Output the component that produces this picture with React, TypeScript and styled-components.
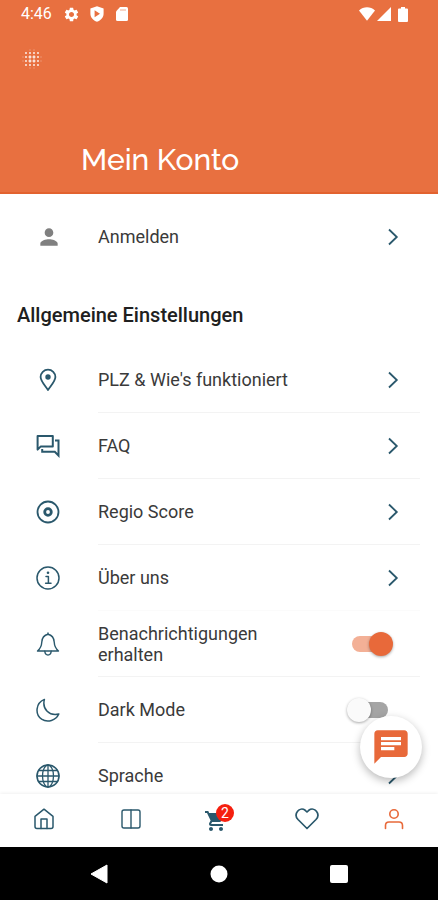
import React, { useState } from "react";
import styled, { createGlobalStyle } from "styled-components";
import {
  MdBlurOn,
  MdChat,
  MdPerson,
  MdSettings,
  MdShoppingCart,
} from "react-icons/md";

const color = {
  brand: "#e87040",
  accent: "#e8693a",
  ink: "#2a586c",
  text: "#3a3a3a",
  line: "#f3f3f3",
  badge: "#f5200f",
};

const GlobalStyle = createGlobalStyle`
  * { box-sizing: border-box; }
  body {
    margin: 0;
    background: #fff;
    color: ${color.text};
    font-family: Roboto, "Liberation Sans", sans-serif;
  }
  button { font: inherit; color: inherit; background: none; border: 0; padding: 0; cursor: pointer; }
  svg { display: block; flex: none; }
`;

const Shell = styled.div`
  display: flex;
  flex-direction: column;
  height: 100vh;
`;

const Header = styled.header`
  display: flex;
  flex-direction: column;
  background: ${color.brand};
  color: #fff;
  border-bottom: 2px solid #e2622f;
`;

const StatusBar = styled.div`
  display: flex;
  align-items: center;
  justify-content: space-between;
  height: 28px;
  padding: 0 30px 0 21px;
`;

const StatusGroup = styled.div<{ $gap: number }>`
  display: flex;
  align-items: center;
  gap: ${(p) => p.$gap}px;
`;

const Clock = styled.time`
  font-size: 16px;
  line-height: 20px;
  margin-right: 2px;
`;

const MenuButton = styled.button`
  align-self: flex-start;
  margin: 19px 0 0 20px;
  opacity: 0.8;
`;

const Title = styled.h1`
  margin: 70px 0 13px 81px;
  font-family: Raleway, Lato, sans-serif;
  font-size: 30px;
  line-height: 38px;
  font-weight: 500;
`;

const ContentFrame = styled.div`
  position: relative;
  flex: 1;
  min-height: 0;
  display: flex;
`;

const Content = styled.main`
  flex: 1;
  overflow-y: auto;
  scrollbar-width: none;
`;

const SectionTitle = styled.h2`
  margin: 33px 17px 20px;
  font-size: 20px;
  line-height: 24px;
  font-weight: 500;
  color: #202020;
`;

const List = styled.ul`
  margin: 0;
  padding: 0;
  list-style: none;
`;

const RowBox = styled.div`
  display: flex;
  align-items: stretch;
  width: 100%;
  height: 66px;
  padding: 0 18px 0 36px;
  text-align: left;
  cursor: pointer;
`;

const AccountRow = styled(RowBox)`
  margin-top: 10px;
`;

const RowIcon = styled.span<{ $muted?: boolean }>`
  display: flex;
  align-items: center;
  width: 62px;
  color: ${(p) => (p.$muted ? "#808080" : color.ink)};
`;

const RowBody = styled.span<{ $line: string }>`
  flex: 1;
  display: flex;
  align-items: center;
  justify-content: space-between;
  gap: 40px;
  padding-right: 15px;
  border-bottom: 1px solid ${(p) => p.$line};
`;

const RowLabel = styled.span`
  font-size: 18px;
  line-height: 21px;
`;

const Switch = styled.input`
  appearance: none;
  flex: none;
  display: flex;
  align-items: center;
  width: 46px;
  height: 24px;
  margin: 0 12px 0 0;
  padding: 4px 5px;
  border-radius: 13px / 12px;
  cursor: pointer;
  background: #a5a5a5;
  background-clip: content-box;

  &::before {
    content: "";
    flex: none;
    width: 24px;
    height: 24px;
    margin: 0 -5px;
    border-radius: 50%;
    background: #fafafa;
    box-shadow: 0 1px 3px rgba(0, 0, 0, 0.35);
  }

  &:checked {
    justify-content: flex-end;
    background-color: #f3b096;
  }

  &:checked::before {
    background: ${color.accent};
  }
`;

const ChatButton = styled.button`
  position: absolute;
  right: 16px;
  bottom: 16px;
  display: grid;
  place-items: center;
  width: 62px;
  height: 62px;
  border-radius: 50%;
  background: #fff;
  color: ${color.accent};
  box-shadow: 0 3px 8px rgba(0, 0, 0, 0.28);
`;

const TabBar = styled.nav`
  display: flex;
  height: 53px;
  background: #fff;
  box-shadow: 0 -1px 3px rgba(0, 0, 0, 0.06);
  z-index: 1;
`;

const Tab = styled.a<{ $active?: boolean }>`
  flex: 1;
  display: grid;
  place-items: center;
  padding-bottom: 3px;
  color: ${(p) => (p.$active ? color.accent : color.ink)};
`;

const CartBox = styled.span`
  position: relative;
  padding: 3px 6px 0 0;
`;

const Badge = styled.span`
  position: absolute;
  top: -2px;
  right: 0;
  width: 18px;
  height: 18px;
  border-radius: 50%;
  background: ${color.badge};
  color: #fff;
  font-size: 14px;
  line-height: 18px;
  text-align: center;
`;

const SystemBar = styled.div`
  display: flex;
  height: 53px;
  padding: 0 39px;
  background: #000;
  color: #fff;
`;

const SystemButton = styled.button`
  flex: 1;
  display: grid;
  place-items: center;
  color: #fff;
`;

type IconProps = { size?: number; width?: number; children: React.ReactNode };

const Line = ({ size = 24, width = 1.4, children }: IconProps) => (
  <svg
    width={size}
    height={size}
    viewBox="0 0 24 24"
    fill="none"
    stroke="currentColor"
    strokeWidth={width}
    strokeLinejoin="round"
    strokeLinecap="round"
    aria-hidden="true"
  >
    {children}
  </svg>
);

const PinIcon = () => (
  <Line width={1.8}>
    <path d="M12 22C9 17.500 4.600 13 4.600 9A7.400 7.400 0 0 1 19.400 9C19.400 13 15 17.500 12 22Z" />
    <circle cx="12" cy="9" r="2.700" fill="currentColor" stroke="none" />
  </Line>
);

const ForumIcon = () => (
  <svg width="24" height="24" viewBox="0 0 24 24" fill="none" stroke="currentColor" strokeWidth="2" aria-hidden="true">
    <path d="M1.600 2H16.800V12.400H4.800L1.600 15.600Z" strokeLinejoin="round" />
    <path d="M19 6.500H22.500V21.500L18.800 17.800H6.200V15" />
  </svg>
);

const TargetIcon = () => (
  <Line width={1.8}>
    <circle cx="12" cy="12" r="10.500" />
    <circle cx="12" cy="12" r="3.300" strokeWidth="2.800" />
  </Line>
);

const InfoIcon = () => (
  <Line width={1.5}>
    <circle cx="12" cy="12" r="11" />
    <circle cx="12" cy="6.800" r="1.300" fill="currentColor" stroke="none" />
    <path d="M10 10.500H12.400V17M9.600 17.300H15" />
  </Line>
);

const BellIcon = () => (
  <Line width={1.4}>
    <path d="M12 2.300C8.200 3.200 6 6.200 5.800 10C5.600 14 4.600 16.400 1.500 19H22.500C19.400 16.400 18.400 14 18.200 10C18 6.200 15.800 3.200 12 2.300Z" />
    <path d="M12 2.300V1M8.800 19.200C9.200 24.200 14.800 24.200 15.200 19.200" />
  </Line>
);

const MoonIcon = () => (
  <Line width={1.5}>
    <path d="M8.400 1.400C-.5 5-1.200 16.400 5.600 21.200C11.600 25.200 20 22.400 22.800 16C13.500 18.400 5.800 11 8.400 1.400Z" />
  </Line>
);

const GlobeIcon = () => (
  <Line width={1.3}>
    <circle cx="12" cy="12" r="11" strokeWidth="1.600" />
    <ellipse cx="12" cy="12" rx="5.500" ry="11" />
    <path d="M12 1V23M1 12H23M3 6.500H21M3 17.500H21" />
  </Line>
);

const ChevronIcon = () => (
  <svg width="24" height="24" viewBox="0 0 24 24" fill="none" stroke={color.ink} strokeWidth="1.800" aria-hidden="true">
    <path d="M8 4.500L15.800 12L8 19.500" />
  </svg>
);

const HomeIcon = () => (
  <Line width={1.5}>
    <path d="M3 9.400L12 2.200L21 9.400V19.500Q21 21.500 19 21.500H5Q3 21.500 3 19.500Z" />
    <path d="M9 21.500V12H15V21.500" />
  </Line>
);

const BookIcon = () => (
  <Line width={1.4}>
    <rect x="3" y="3" width="18" height="18" rx="2" />
    <path d="M12 3V21" />
  </Line>
);

const HeartIcon = () => (
  <Line width={1.7}>
    <path d="M12 21.500L3 12.500C-2 7 4.500-.8 10.200 3.300L12 5L13.800 3.300C19.500-.8 26 7 21 12.500Z" />
  </Line>
);

const ProfileIcon = () => (
  <Line width={1.6}>
    <circle cx="12" cy="7" r="4.200" />
    <path d="M3.500 21.500V18.500Q3.500 15 7 15H17Q20.500 15 20.500 18.500V21.500" />
  </Line>
);

const ShieldPlayIcon = () => (
  <svg width="16" height="16" viewBox="0 0 16 16" aria-hidden="true">
    <path
      fill="#fff"
      fillRule="evenodd"
      d="M8 .3L14.600 2.600V7.600C14.600 11.600 12 14.500 8 15.800C4 14.500 1.400 11.600 1.400 7.600V2.600ZM5.600 4.300V11.300L11 7.800Z"
    />
  </svg>
);

const CardIcon = () => (
  <svg width="16" height="16" viewBox="0 0 16 16" aria-hidden="true">
    <path fill="#fff" d="M6 1H12.500Q14 1 14 2.500V13.500Q14 15 12.500 15H3.500Q2 15 2 13.500V5.500Z" />
    <path stroke={color.brand} strokeWidth="1" opacity="0.6" d="M6 4H12" />
  </svg>
);

const WifiIcon = () => (
  <svg width="16" height="14" viewBox="0 0 16 14" aria-hidden="true">
    <path fill="#fff" d="M0 3.500C4.500-.8 11.500-.8 16 3.500L8 13.800Z" />
  </svg>
);

const SignalIcon = () => (
  <svg width="14" height="14" viewBox="0 0 14 14" aria-hidden="true">
    <path fill="#fff" d="M14 0V14H0Z" />
  </svg>
);

const BatteryIcon = () => (
  <svg width="10" height="15" viewBox="0 0 10 15" aria-hidden="true">
    <path fill="#fff" d="M3 0H7V1.500H9Q10 1.500 10 2.500V14Q10 15 9 15H1Q0 15 0 14V2.500Q0 1.500 1 1.500H3Z" />
  </svg>
);

const links = [
  { label: "PLZ & Wie's funktioniert", icon: <PinIcon /> },
  { label: "FAQ", icon: <ForumIcon /> },
  { label: "Regio Score", icon: <TargetIcon /> },
  { label: "Über uns", icon: <InfoIcon />, faint: true },
];

type RowProps = { label: string; icon: React.ReactNode; line?: string };

const LinkRow = ({ label, icon, line = color.line }: RowProps) => (
  <RowBox as="button" type="button">
    <RowIcon>{icon}</RowIcon>
    <RowBody $line={line}>
      <RowLabel>{label}</RowLabel>
      <ChevronIcon />
    </RowBody>
  </RowBox>
);

const SwitchRow = ({ label, icon, initial }: RowProps & { initial: boolean }) => {
  const [on, setOn] = useState(initial);
  return (
    <RowBox as="label">
      <RowIcon>{icon}</RowIcon>
      <RowBody $line={color.line}>
        <RowLabel>{label}</RowLabel>
        <Switch type="checkbox" role="switch" checked={on} onChange={(e) => setOn(e.target.checked)} />
      </RowBody>
    </RowBox>
  );
};

export default function App() {
  return (
    <Shell>
      <GlobalStyle />
      <Header>
        <StatusBar>
          <StatusGroup $gap={9}>
            <Clock>4:46</Clock>
            <MdSettings size={17} />
            <ShieldPlayIcon />
            <CardIcon />
          </StatusGroup>
          <StatusGroup $gap={7}>
            <StatusGroup $gap={2}>
              <WifiIcon />
              <SignalIcon />
            </StatusGroup>
            <BatteryIcon />
          </StatusGroup>
        </StatusBar>
        <MenuButton type="button" aria-label="Menü">
          <MdBlurOn size={24} />
        </MenuButton>
        <Title>Mein Konto</Title>
      </Header>

      <ContentFrame>
        <Content>
          <AccountRow as="button" type="button">
            <RowIcon $muted>
              <MdPerson size={26} />
            </RowIcon>
            <RowBody $line="transparent">
              <RowLabel>Anmelden</RowLabel>
              <ChevronIcon />
            </RowBody>
          </AccountRow>
          <SectionTitle>Allgemeine Einstellungen</SectionTitle>
          <List>
            {links.map((l) => (
              <li key={l.label}>
                <LinkRow label={l.label} icon={l.icon} line={l.faint ? "#fbfbfb" : color.line} />
              </li>
            ))}
            <li>
              <SwitchRow label="Benachrichtigungen erhalten" icon={<BellIcon />} initial />
            </li>
            <li>
              <SwitchRow label="Dark Mode" icon={<MoonIcon />} initial={false} />
            </li>
            <li>
              <LinkRow label="Sprache" icon={<GlobeIcon />} />
            </li>
          </List>
        </Content>
        <ChatButton type="button" aria-label="Chat">
          <MdChat size={40} />
        </ChatButton>
      </ContentFrame>

      <TabBar>
        <Tab href="#home" aria-label="Start">
          <HomeIcon />
        </Tab>
        <Tab href="#magazin" aria-label="Magazin">
          <BookIcon />
        </Tab>
        <Tab href="#warenkorb" aria-label="Warenkorb">
          <CartBox>
            <MdShoppingCart size={24} />
            <Badge>2</Badge>
          </CartBox>
        </Tab>
        <Tab href="#favoriten" aria-label="Favoriten">
          <HeartIcon />
        </Tab>
        <Tab href="#konto" aria-label="Konto" aria-current="page" $active>
          <ProfileIcon />
        </Tab>
      </TabBar>

      <SystemBar>
        <SystemButton type="button" aria-label="Zurück">
          <svg width="18" height="20" viewBox="0 0 18 20" aria-hidden="true">
            <path fill="currentColor" d="M17 1V19L1 10Z" stroke="currentColor" strokeLinejoin="round" />
          </svg>
        </SystemButton>
        <SystemButton type="button" aria-label="Startbildschirm">
          <svg width="18" height="18" viewBox="0 0 18 18" aria-hidden="true">
            <circle cx="9" cy="9" r="8.500" fill="currentColor" />
          </svg>
        </SystemButton>
        <SystemButton type="button" aria-label="Übersicht">
          <svg width="18" height="18" viewBox="0 0 18 18" aria-hidden="true">
            <rect width="18" height="18" rx="2" fill="currentColor" />
          </svg>
        </SystemButton>
      </SystemBar>
    </Shell>
  );
}
